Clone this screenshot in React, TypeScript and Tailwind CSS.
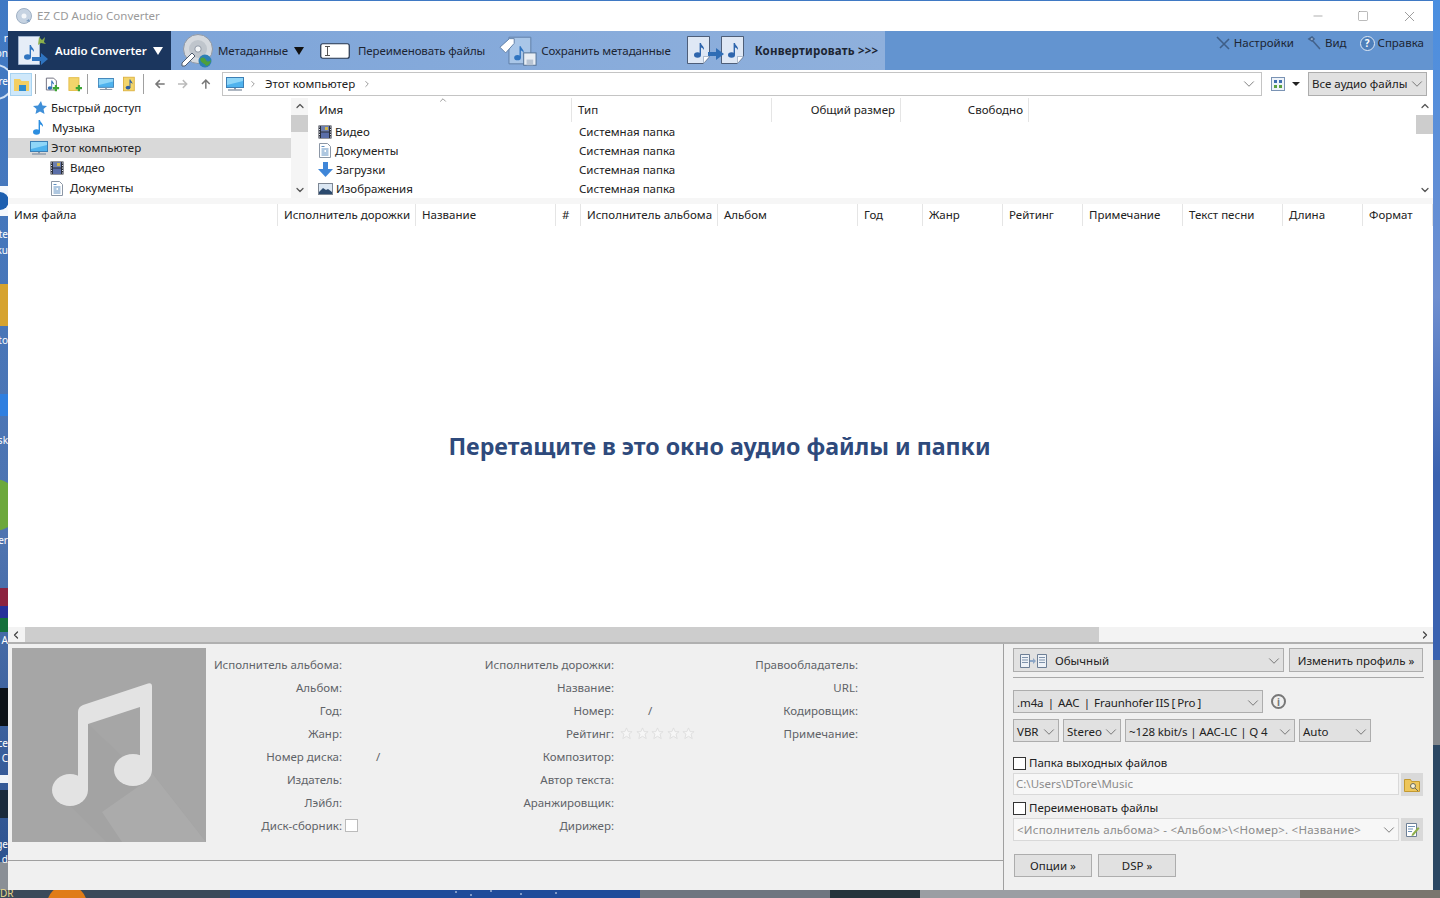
import type React from "react";
import { ChevronDown, ChevronLeft, ChevronRight, ChevronUp, Minus, Square, X } from "lucide-react";

const columns = [
	{ name: "Имя файла", width: "w-[270px]" },
	{ name: "Исполнитель дорожки", width: "w-[138px]" },
	{ name: "Название", width: "w-[140px]" },
	{ name: "#", width: "w-[25px]" },
	{ name: "Исполнитель альбома", width: "w-[137px]" },
	{ name: "Альбом", width: "w-[140px]" },
	{ name: "Год", width: "w-[65px]" },
	{ name: "Жанр", width: "w-[80px]" },
	{ name: "Рейтинг", width: "w-[80px]" },
	{ name: "Примечание", width: "w-[100px]" },
	{ name: "Текст песни", width: "w-[100px]" },
	{ name: "Длина", width: "w-[80px]" },
	{ name: "Формат", width: "w-[70px]" },
];

const metaRows = [
	["Исполнитель альбома:", "", "Исполнитель дорожки:", "", "Правообладатель:"],
	["Альбом:", "", "Название:", "", "URL:"],
	["Год:", "", "Номер:", "/", "Кодировщик:"],
	["Жанр:", "", "Рейтинг:", "stars", "Примечание:"],
	["Номер диска:", "/", "Композитор:", "", ""],
	["Издатель:", "", "Автор текста:", "", ""],
	["Лэйбл:", "", "Аранжировщик:", "", ""],
	["Диск-сборник:", "check", "Дирижер:", "", ""],
];

// clipped desktop icon captions that stick out left of the window
const desktopLabels = [
	{ text: "r", className: "top-[32px]" },
	{ text: "on", className: "top-[47px]" },
	{ text: "re", className: "top-[75px]" },
	{ text: "te", className: "top-[228px]" },
	{ text: "ku", className: "top-[244px]" },
	{ text: "to", className: "top-[334px]" },
	{ text: "sk", className: "top-[434px]" },
	{ text: "er", className: "top-[534px]" },
	{ text: "A", className: "top-[634px]" },
	{ text: "ce", className: "top-[737px]" },
	{ text: "C", className: "top-[752px]" },
	{ text: "ge", className: "top-[838px]" },
	{ text: "d", className: "top-[853px]" },
];

function FilmIcon() {
	return (
		<svg width="14" height="14" viewBox="0 0 14 14" className="shrink-0">
			<rect x="0.5" y="0.5" width="13" height="13" fill="#2b2f3a" />
			<rect x="3" y="1" width="8" height="5.5" fill="#6d7fae" />
			<rect x="3" y="7.5" width="8" height="5.5" fill="#5a6ea8" />
			<rect x="7" y="2" width="3" height="3" fill="#d2b64a" />
			<path d="M1 2h1M1 4.5h1M1 7h1M1 9.5h1M1 12h1M12 2h1M12 4.5h1M12 7h1M12 9.5h1M12 12h1" stroke="#dfe3ea" />
		</svg>
	);
}

function DocIcon() {
	return (
		<svg width="14" height="15" viewBox="0 0 14 15" className="shrink-0">
			<path d="M1.5.5h8l3 3v11h-11z" fill="#fff" stroke="#8c97a6" />
			<path d="M3.5 3.5h3M3.5 6h7M3.5 8h3M8 8h2.5M3.5 10h7M3.5 12h7" stroke="#5f8fc0" />
		</svg>
	);
}

function MonitorIcon({ width = 18 }: { width?: number }) {
	return (
		<svg width={width} height={(width * 14) / 18} viewBox="0 0 18 14" className="shrink-0">
			<rect x="0.5" y="0.5" width="17" height="10" fill="#4fb3ee" stroke="#3c7fb5" />
			<path d="M1 1h16v3L1 8z" fill="#8fd6f8" />
			<path d="M2 13h14" stroke="#8b98a8" strokeWidth="1.4" />
			<path d="M8 11h2v1.5H8z" fill="#8b98a8" />
		</svg>
	);
}

function NoteGlyph({ x, y, scale = 1, fill = "#3d7cc0" }: { x: number; y: number; scale?: number; fill?: string }) {
	return (
		<g transform={`translate(${x} ${y}) scale(${scale})`}>
			<ellipse cx="3.5" cy="12" rx="3.5" ry="2.8" fill={fill} />
			<path d="M5.6 12V0h1.4c.3 2.6 3.6 3.4 3 7-.7-1.8-2-2.4-3-2.6V12z" fill={fill} />
		</g>
	);
}

function DocNote({ x, y }: { x: number; y: number }) {
	return (
		<g transform={`translate(${x} ${y})`}>
			<path d="M.5.5h22v20l-6 7H.5z" fill="#dfe8f5" stroke="#33435c" strokeWidth="0.8" />
			<path d="M22.5 20.5l-6 7v-7z" fill="#fff" stroke="#8296b2" strokeWidth="0.6" />
			<NoteGlyph x={7} y={7} fill="#2f66ad" />
		</g>
	);
}

function ConverterIcon() {
	return (
		<svg width="32" height="32" viewBox="0 0 32 32" className="shrink-0">
			<path d="M1.5 1.5h21v28h-21z" fill="#e6edf7" stroke="#9fb2cc" />
			<NoteGlyph x={7} y={10} fill="#2f74c0" />
			<path d="M22 2l3 3 3-3-1 5 2 2-5-1-3 2z" fill="#8bb04c" />
			<path d="M15 22h9v-4l7 6-7 6v-4h-9z" fill="#2f74c0" />
		</svg>
	);
}

function MetadataIcon() {
	return (
		<svg width="34" height="34" viewBox="0 0 34 34" className="shrink-0">
			<circle cx="18" cy="15" r="14.5" fill="#d5d9de" stroke="#8f98a5" />
			<circle cx="18" cy="15" r="9" fill="#bfc5cc" />
			<circle cx="18" cy="15" r="3.2" fill="#f3f5f7" stroke="#8f98a5" />
			<path d="M2 29l10-10 3 3-10 10H2z" fill="#fff" stroke="#4c5a6d" />
			<circle cx="25" cy="27" r="6.5" fill="#2d7fb5" />
			<path d="M20 25c3-3 5-1 6 1s3 2 5 0c0 3-3 6-5 6-1-3-5-2-6-7z" fill="#4ea03c" />
		</svg>
	);
}

function SaveMetaIcon() {
	return (
		<svg width="38" height="32" viewBox="0 0 40 32" className="shrink-0">
			<path d="M10.5 1.5h23v28h-23z" fill="#a9c6e8" stroke="#5f7ea6" />
			<path d="M1 12l10-9h5v5L7 18z" fill="#fff" stroke="#5f7ea6" />
			<NoteGlyph x={16} y={11} fill="#2f74c0" />
			<rect x="26" y="18" width="13" height="13" fill="#e9eef4" stroke="#4f6d92" />
			<rect x="29" y="25" width="7" height="6" fill="#b7c4d4" />
		</svg>
	);
}

function ConvertIcon() {
	return (
		<svg width="60" height="32" viewBox="0 0 60 32" className="shrink-0">
			<DocNote x={0} y={1} />
			<DocNote x={34} y={1} />
			<path d="M21 17h8v-4l8 6-8 6v-4h-8z" fill="#2f6db5" />
		</svg>
	);
}

function RenameIcon() {
	return (
		<svg width="30" height="16" viewBox="0 0 30 16" className="shrink-0">
			<rect x="0.75" y="0.75" width="28.5" height="14.5" rx="2" fill="#fff" stroke="#26364e" strokeWidth="1.2" />
			<path d="M5 3.5h5M5 12.5h5M7.5 3.5v9" stroke="#555" />
		</svg>
	);
}

function TriangleDown({ color }: { color: string }) {
	return <span className={`ml-[6px] h-0 w-0 shrink-0 border-x-[5px] border-t-[8px] border-x-transparent ${color}`} />;
}

function ToolButton({
	children,
	label,
	className = "",
	bold,
}: {
	children: React.ReactNode;
	label: string;
	className?: string;
	bold?: boolean;
}) {
	return (
		<div className={`flex shrink-0 items-center whitespace-nowrap ${className}`}>
			{children}
			<span className={bold ? "font-bold tracking-[0.2px]" : "tracking-[-0.1px]"}>{label}</span>
		</div>
	);
}

function Combo({ children, className = "", muted }: { children: React.ReactNode; className?: string; muted?: boolean }) {
	return (
		<div
			className={`flex items-center justify-between overflow-hidden border pl-[3px] ${
				muted ? "border-[#d9d9d9] bg-[#f7f7f7] text-[#8b8b8b]" : "border-[#adadad] bg-[#e1e1e1] text-[#222]"
			} ${className}`}
		>
			<span className="whitespace-nowrap">{children}</span>
			<ChevronDown size={18} strokeWidth={0.9} className="shrink-0 text-[#444]" />
		</div>
	);
}

function PlainButton({ children, className = "" }: { children: React.ReactNode; className?: string }) {
	return (
		<div className={`flex items-center justify-center border border-[#adadad] bg-[#e1e1e1] text-[#222] ${className}`}>
			{children}
		</div>
	);
}

function Checkbox({ label }: { label: string }) {
	return (
		<div className="flex items-center gap-[3px] text-[#222]">
			<span className="h-[13px] w-[13px] border border-[#333] bg-white" />
			{label}
		</div>
	);
}

function Star() {
	return (
		<svg width="13" height="13" viewBox="0 0 14 14" className="shrink-0">
			<path d="M7 1l1.8 4H13l-3.3 2.7L11 12.5 7 10l-4 2.5 1.3-4.8L1 5h4.200z" fill="#f6f6f6" stroke="#dedede" />
		</svg>
	);
}

function Desktop() {
	return (
		<>
			<svg className="absolute inset-0" width="1440" height="898" viewBox="0 0 1440 898">
				<defs>
					<linearGradient id="left" x1="0" y1="0" x2="0" y2="1">
						<stop offset="0" stopColor="#3f79c4" />
						<stop offset="0.6" stopColor="#4f74b0" />
						<stop offset="1" stopColor="#2a4f8c" />
					</linearGradient>
					<linearGradient id="right" x1="0" y1="0" x2="0" y2="1">
						<stop offset="0" stopColor="#4a8fe0" />
						<stop offset="0.45" stopColor="#6f8fd0" />
						<stop offset="0.72" stopColor="#3a62b0" />
					</linearGradient>
				</defs>
				<rect width="1440" height="898" fill="url(#left)" />
				<rect x="1433" width="7" height="660" fill="url(#right)" />
				<rect x="1433" y="660" width="7" height="85" fill="#85888c" />
				<rect x="1433" y="745" width="7" height="153" fill="#2b4763" />
				<circle cx="-4" cy="82" r="17" fill="none" stroke="#cfe0f5" strokeWidth="2" />
				<rect y="186" width="8" height="30" fill="#f5f8fc" />
				<circle cx="0" cy="201" r="9" fill="#1d5fb0" />
				<rect y="284" width="8" height="42" fill="#d6a32f" />
				<rect y="394" width="8" height="22" fill="#2f7fe0" />
				<circle cx="-6" cy="505" r="26" fill="#6ca83c" />
				<rect y="588" width="8" height="18" fill="#8c2340" />
				<rect y="606" width="8" height="12" fill="#26309a" />
				<rect y="618" width="8" height="14" fill="#14703c" />
				<rect y="688" width="8" height="38" fill="#0c1218" />
				<rect y="775" width="8" height="8" fill="#f0f4f8" />
				<rect y="790" width="8" height="28" fill="#1a2a3c" />
				<rect y="862" width="8" height="28" fill="#8a8f96" />
				<rect y="890" width="1440" height="8" fill="#3b4a5a" />
				<circle cx="67" cy="905" r="20" fill="#e07c18" />
				<rect x="230" y="890" width="410" height="8" fill="#1f4c9a" />
				<path d="M455 892h2M470 895h2M490 891h2M520 894h2M555 893h2" stroke="#dfe8f5" />
				<rect x="640" y="890" width="190" height="8" fill="#6e7680" />
				<rect x="830" y="890" width="90" height="8" fill="#26343c" />
				<rect x="920" y="890" width="380" height="8" fill="#9a9ea3" />
				<rect x="1300" y="890" width="140" height="8" fill="#7a766f" />
			</svg>
			{desktopLabels.map((label) => (
				<span key={label.text} className={`absolute right-[1432px] text-[10px] leading-3 text-white ${label.className}`}>
					{label.text}
				</span>
			))}
			<span className="absolute left-0 top-[888px] text-[10px] leading-[10px] text-[#e8d88a]">DR</span>
		</>
	);
}

export default function App() {
	return (
		<div className="relative flex h-[898px] w-[1440px] flex-col overflow-hidden pb-2 pl-2 pr-[7px] pt-px font-['Noto_Sans',sans-serif] text-[11.5px] leading-4 text-[#222]">
			<Desktop />
			<div className="relative flex min-h-0 flex-1 flex-col bg-white">
				<header className="flex h-[30px] shrink-0 items-center pl-[8px] text-[#9a9a9a]">
					<svg width="16" height="16" viewBox="0 0 16 16" className="mr-[5px]">
						<circle cx="8" cy="8" r="7.500" fill="#c6d3e2" stroke="#9fb0c4" />
						<circle cx="8" cy="8" r="2.500" fill="#f4f7fa" />
						<path d="M10 13l3-2 1 3z" fill="#7b9cc0" />
					</svg>
					EZ CD Audio Converter
					<div className="ml-auto flex items-center gap-[32px] pr-[15px] text-[#777]">
						<Minus size={14} strokeWidth={1} />
						<Square size={12} strokeWidth={1} />
						<X size={17} strokeWidth={1} />
					</div>
				</header>

				<nav className="flex h-[39px] shrink-0 bg-[#6394d0] text-[#1c2533]">
					<div className="flex w-[163px] items-center whitespace-nowrap bg-[#1b365e] pl-[9px] font-semibold text-white">
						<ConverterIcon />
						<span className="ml-[6px]">Audio Converter</span>
						<TriangleDown color="border-t-white" />
					</div>
					<div className="flex w-[714px] items-center bg-gradient-to-r from-[#7ea5d9] to-[#8fb0dc] pl-[9px]">
						<ToolButton label="Метаданные">
							<span className="mr-[4px]">
								<MetadataIcon />
							</span>
						</ToolButton>
						<TriangleDown color="border-t-[#111]" />
						<ToolButton label="Переименовать файлы" className="ml-[16px]">
							<span className="mr-[8px]">
								<RenameIcon />
							</span>
						</ToolButton>
						<ToolButton label="Сохранить метаданные" className="ml-[14px]">
							<span className="mr-[4px]">
								<SaveMetaIcon />
							</span>
						</ToolButton>
						<ToolButton label="Конвертировать >>>" className="ml-[16px]" bold>
							<span className="mr-[8px]">
								<ConvertIcon />
							</span>
						</ToolButton>
					</div>
					<div className="ml-auto flex items-start gap-[13px] whitespace-nowrap pr-[9px] pt-[4px]">
						<div className="flex items-center gap-[4px]">
							<svg width="14" height="14" viewBox="0 0 14 14">
								<path d="M1 1l12 12M13 3L4 12" stroke="#3f5f88" strokeWidth="1.600" />
							</svg>
							Настройки
						</div>
						<div className="flex items-center gap-[4px]">
							<svg width="14" height="14" viewBox="0 0 14 14">
								<path d="M2 3l3-2 2 2-2 2zM5 4l8 9" stroke="#44638c" strokeWidth="1.600" fill="#c5d3e6" />
							</svg>
							Вид
						</div>
						<div className="flex items-center gap-[3px]">
							<span className="flex h-[15px] w-[15px] items-center justify-center rounded-full border border-[#dfe9f5] bg-[#4e7fba] text-[10px] font-bold text-white">
								?
							</span>
							Справка
						</div>
					</div>
				</nav>

				<div className="flex h-[28px] shrink-0 items-center pl-[2px] pr-[6px]">
					<div className="flex h-[23px] w-[23px] items-center justify-center border border-[#a8d3f0] bg-[#cfe8fa]">
						<svg width="17" height="15" viewBox="0 0 17 15">
							<path d="M1 2h6l1.500 2H16v10H1z" fill="#f3cf63" />
							<rect x="6" y="8" width="7" height="6" fill="#2f8ccf" />
						</svg>
					</div>
					<span className="ml-[3px] mr-[9px] h-[20px] w-px bg-[#a0a0a0]" />
					<svg width="15" height="17" viewBox="0 0 16 17">
						<path d="M1.500 1.500h8l3 3v10h-11z" fill="#fff" stroke="#667" />
						<NoteGlyph x={3} y={4} scale={0.7} fill="#2f6db5" />
						<path d="M12 9v7M8.500 12.500h7" stroke="#3fa535" strokeWidth="2.400" />
					</svg>
					<svg width="15" height="17" viewBox="0 0 16 17" className="ml-[8px]">
						<rect x="1" y="1" width="11" height="14" fill="#f3d56b" stroke="#e3bc45" />
						<path d="M12 9v7M8.500 12.500h7" stroke="#3fa535" strokeWidth="2.400" />
					</svg>
					<span className="ml-[5px] mr-[10px] h-[20px] w-px bg-[#a0a0a0]" />
					<MonitorIcon width={16} />
					<svg width="13" height="16" viewBox="0 0 14 16" className="ml-[9px]">
						<rect x="0.500" y="0.500" width="12" height="15" fill="#f3d56b" stroke="#dcb140" />
						<NoteGlyph x={3} y={3} scale={0.75} fill="#2f5fa0" />
					</svg>
					<span className="ml-[7px] mr-[10px] h-[20px] w-px bg-[#a0a0a0]" />
					<svg width="12" height="12" viewBox="0 0 12 12">
						<path d="M11 6H2M6 2L2 6l4 4" fill="none" stroke="#777" strokeWidth="1.500" />
					</svg>
					<svg width="12" height="12" viewBox="0 0 12 12" className="ml-[11px]">
						<path d="M1 6h9M6 2l4 4-4 4" fill="none" stroke="#bbb" strokeWidth="1.500" />
					</svg>
					<svg width="12" height="12" viewBox="0 0 12 12" className="ml-[12px]">
						<path d="M6 11V2M2 6l4-4 4 4" fill="none" stroke="#777" strokeWidth="1.500" />
					</svg>
					<div className="ml-[10px] flex h-[24px] w-[1040px] shrink-0 items-center border border-[#c4c4c4] pl-[3px] pr-[3px]">
						<MonitorIcon />
						<ChevronRight size={10} className="ml-[4px] text-[#888]" />
						<span className="ml-[7px]">Этот компьютер</span>
						<ChevronRight size={10} className="ml-[7px] text-[#888]" />
						<ChevronDown size={18} strokeWidth={0.9} className="ml-auto text-[#444]" />
					</div>
					<svg width="14" height="14" viewBox="0 0 14 14" className="ml-[9px] shrink-0">
						<rect x="0.500" y="0.500" width="13" height="13" fill="#eef3f9" stroke="#7a93b4" />
						<path d="M3 3h3v3H3zM8 3h3v3H8z" fill="#3f6fb0" />
						<path d="M3 8h3v3H3zM8 8h3v3H8z" fill="#5aa040" />
					</svg>
					<span className="ml-[7px] h-0 w-0 shrink-0 border-x-[4px] border-t-[4px] border-x-transparent border-t-[#222]" />
					<Combo className="ml-[8px] h-[24px] w-[119px] shrink-0">Все аудио файлы</Combo>
				</div>

				<section className="flex h-[100px] shrink-0 overflow-hidden">
					<div className="flex w-[283px] shrink-0 flex-col">
						<div className="flex h-[20px] items-center gap-[3px] pl-[24px]">
							<svg width="16" height="16" viewBox="0 0 16 16">
								<path d="M9 1l1.500 4.500L15 6l-3.500 3 1 5L8 11.500 3.500 14l1-5L1 6l5-.5z" fill="#3f8fd8" />
							</svg>
							Быстрый доступ
						</div>
						<div className="flex h-[20px] items-center gap-[7px] pl-[25px]">
							<svg width="12" height="16" viewBox="0 0 12 16">
								<NoteGlyph x={0} y={0} fill="#2c8ee0" />
							</svg>
							Музыка
						</div>
						<div className="flex h-[20px] items-center gap-[3px] bg-[#d9d9d9] pl-[22px]">
							<MonitorIcon />
							Этот компьютер
						</div>
						<div className="flex h-[20px] items-center gap-[6px] pl-[42px]">
							<FilmIcon />
							Видео
						</div>
						<div className="flex h-[20px] items-center gap-[6px] pl-[42px]">
							<DocIcon />
							Документы
						</div>
					</div>
					<div className="flex w-[17px] shrink-0 flex-col items-center bg-[#f5f5f5]">
						<ChevronUp size={12} strokeWidth={2.500} className="my-[2px] text-[#555]" />
						<div className="mt-[1px] h-[17px] w-full bg-[#cdcdcd]" />
						<ChevronDown size={12} strokeWidth={2.500} className="mt-auto mb-[2px] text-[#555]" />
					</div>
					<div className="relative flex min-w-0 flex-1 flex-col pl-[5px]">
						<div className="flex h-[24px] items-center">
							<div className="h-full w-[259px] border-r border-[#e5e5e5] pl-[6px] pt-[4px]">Имя</div>
							<div className="h-full w-[200px] border-r border-[#e5e5e5] pl-[6px] pt-[4px]">Тип</div>
							<div className="h-full w-[129px] border-r border-[#e5e5e5] pr-[5px] pt-[4px] text-right">Общий размер</div>
							<div className="h-full w-[128px] border-r border-[#e5e5e5] pr-[5px] pt-[4px] text-right">Свободно</div>
							<ChevronUp size={10} className="absolute left-[130px] top-[-3px] text-[#888]" />
						</div>
						{[
							{ icon: <FilmIcon />, name: "Видео" },
							{ icon: <DocIcon />, name: "Документы" },
							{
								icon: (
									<svg width="15" height="15" viewBox="0 0 15 15" className="shrink-0">
										<path d="M5 0h5v7h5l-7.500 8L0 7h5z" fill="#3f86d8" />
									</svg>
								),
								name: "Загрузки",
							},
							{
								icon: (
									<svg width="15" height="12" viewBox="0 0 15 12" className="shrink-0">
										<rect x="0.500" y="0.500" width="14" height="11" fill="#dbe7f3" stroke="#7d8794" />
										<path d="M1 9l4-4 3 2 2-1 4 3v2H1z" fill="#2c4a6e" />
									</svg>
								),
								name: "Изображения",
							},
						].map((row) => (
							<div key={row.name} className="flex h-[19px] shrink-0 items-center">
								<div className="flex w-[259px] items-center gap-[3px] pl-[5px]">
									{row.icon}
									{row.name}
								</div>
								<div className="pl-[7px]">Системная папка</div>
							</div>
						))}
					</div>
					<div className="flex w-[17px] shrink-0 flex-col items-center">
						<ChevronUp size={12} strokeWidth={2.500} className="my-[2px] text-[#555]" />
						<div className="mt-[1px] h-[19px] w-full bg-[#cdcdcd]" />
						<ChevronDown size={12} strokeWidth={2.500} className="mt-auto mb-[2px] text-[#555]" />
					</div>
				</section>

				<div className="h-[6px] shrink-0 bg-[#f6f6f6]" />

				<div className="flex h-[22px] shrink-0 items-center">
					{columns.map((col) => (
						<div key={col.name} className={`h-full shrink-0 whitespace-nowrap border-r border-[#e5e5e5] pl-[6px] pt-[3px] ${col.width}`}>
							{col.name}
						</div>
					))}
				</div>

				<main className="flex min-h-0 flex-1 items-center justify-center pr-[2px] pt-[38px] text-[23.2px] font-bold leading-7 text-[#2e4a7c]">
					Перетащите в это окно аудио файлы и папки
				</main>

				<div className="flex h-[15px] shrink-0 items-center bg-[#f3f3f3]">
					<ChevronLeft size={12} strokeWidth={2.500} className="mx-[2px] text-[#444]" />
					<div className="ml-[1px] h-full w-[1074px] bg-[#cdcdcd]" />
					<ChevronRight size={12} strokeWidth={2.500} className="ml-auto mr-[2px] text-[#444]" />
				</div>

				<footer className="flex h-[248px] shrink-0 border-t-2 border-[#b0b0b0] bg-[#f0f0f0]">
					<div className="flex w-[996px] shrink-0 flex-col border-r border-[#a0a0a0]">
						<div className="flex h-[217px] border-b border-[#a0a0a0] pl-[4px] pt-[4px]">
							<div className="h-[194px] w-[194px] shrink-0 bg-[#a6a6a6]">
								<svg width="194" height="194" viewBox="0 0 194 194">
									<path d="M76 76l52 49 12 0 54 69H94l-36-36 18-16z" fill="#a3a3a3" />
									<path d="M140 125l54 69H110l-20-30 40-28z" fill="#ababab" />
									<ellipse cx="58" cy="142" rx="18" ry="16" fill="#e3e3e3" />
									<ellipse cx="121" cy="122" rx="19" ry="16" fill="#e3e3e3" />
									<path d="M66 142V64q0-5 5-7l65-21.500q4-1 4 3V122h-12V59L76 76v66z" fill="#e3e3e3" />
								</svg>
							</div>
							<div className="mt-[5px] grid h-[184px] grid-cols-[136px_136px_136px_136px_108px] grid-rows-[repeat(8,23px)]">
								{metaRows.flatMap((row, r) =>
									row.map((cell, c) => {
										const isLabel = c % 2 === 0;
										const key = `${r}-${c}`;
										if (isLabel) {
											return (
												<div key={key} className="self-center whitespace-nowrap text-right text-[#5f6368]">
													{cell}
												</div>
											);
										}
										if (cell === "stars") {
											return (
												<div key={key} className="flex items-center gap-[2.500px] pl-[6px]">
													<Star />
													<Star />
													<Star />
													<Star />
													<Star />
												</div>
											);
										}
										if (cell === "check") {
											return (
												<div key={key} className="flex items-center pl-[3px]">
													<span className="h-[13px] w-[13px] border border-[#bbb] bg-white" />
												</div>
											);
										}
										return (
											<div key={key} className="self-center pl-[34px] text-[#5f6368]">
												{cell}
											</div>
										);
									}),
								)}
							</div>
						</div>
					</div>

					<div className="flex min-w-0 flex-1 flex-col pl-[9px] pr-[2px] pt-[4px]">
						<div className="flex gap-[5px] pr-[8px]">
							<Combo className="h-[24px] w-[271px] pl-[6px] pt-[2px]">
								<span className="flex items-center gap-[8px]">
									<svg width="27" height="14" viewBox="0 0 27 14">
										<path d="M.5.5h9v13h-9zM17.500.5h9v13h-9z" fill="#eef2f7" stroke="#6d7f96" />
										<path d="M2 3.500h6M2 6h6M2 8.500h6M19 3.500h6M19 6h6M19 8.500h6" stroke="#7f93ac" />
										<path d="M10 6h3V4l3 3-3 3V8h-3z" fill="#8ca6c6" />
									</svg>
									Обычный
								</span>
							</Combo>
							<PlainButton className="h-[24px] w-[134px] pt-[2px]">Изменить профиль »</PlainButton>
						</div>
						<div className="mt-[5px] h-px w-[411px] bg-[#a8a8a8]" />
						<div className="mt-[12px] flex items-center gap-[8px]">
							<Combo className="h-[23px] w-[250px] pt-[2px] tracking-[-0.1px] [word-spacing:-0.8px]">.m4a &nbsp;|&nbsp; AAC &nbsp;|&nbsp; Fraunhofer IIS [ Pro ]</Combo>
							<span className="flex h-[15px] w-[15px] items-center justify-center rounded-full border-2 border-[#777] text-[10px] font-bold leading-none text-[#777]">
								i
							</span>
						</div>
						<div className="mt-[6px] flex gap-[4px]">
							<Combo className="h-[23px] w-[46px] pt-[2px]">VBR</Combo>
							<Combo className="h-[23px] w-[58px] pt-[2px]">Stereo</Combo>
							<Combo className="h-[23px] w-[170px] pt-[2px] tracking-[-0.1px]">~128 kbit/s | AAC-LC | Q 4</Combo>
							<Combo className="h-[23px] w-[72px] pt-[2px]">Auto</Combo>
						</div>
						<div className="mt-[12px] pt-px">
							<Checkbox label="Папка выходных файлов" />
						</div>
						<div className="mt-[2px] flex gap-[2px]">
							<div className="flex h-[22px] w-[386px] items-center border border-[#d9d9d9] bg-[#f7f7f7] pl-[2px] text-[#8b8b8b]">
								C:\Users\DTore\Music
							</div>
							<div className="flex h-[23px] w-[22px] items-center justify-center bg-[#d9d9d9]">
								<svg width="16" height="14" viewBox="0 0 16 14">
									<path d="M.5 1.500h6l1 2h8v10H.5z" fill="#eec65a" stroke="#c49a30" />
									<circle cx="9" cy="8" r="2.500" fill="#f7f1d8" stroke="#6a6a5a" />
									<path d="M11 10l3 3" stroke="#6a6a5a" />
								</svg>
							</div>
						</div>
						<div className="mt-[4px]">
							<Checkbox label="Переименовать файлы" />
						</div>
						<div className="mt-[2px] flex gap-[2px]">
							<Combo muted className="h-[23px] w-[386px] border-[#d9d9d9] tracking-[0.23px]">
								{"<Исполнитель альбома> - <Альбом>\\<Номер>. <Название>"}
							</Combo>
							<div className="flex h-[23px] w-[22px] items-center justify-center bg-[#d9d9d9]">
								<svg width="15" height="16" viewBox="0 0 15 16">
									<path d="M1.500 1.500h10v13h-10z" fill="#fff" stroke="#6d7f96" />
									<path d="M3 4.500h7M3 7h5M3 9.500h4" stroke="#6d8fb5" />
									<path d="M7 12l6-7 1.500 1.500-6 7-2 .5z" fill="#8fb04c" />
								</svg>
							</div>
						</div>
						<div className="mt-[13px] flex gap-[6px] pl-px">
							<PlainButton className="h-[23px] w-[78px]">Опции »</PlainButton>
							<PlainButton className="h-[23px] w-[78px]">DSP »</PlainButton>
						</div>
					</div>
				</footer>
			</div>
		</div>
	);
}
